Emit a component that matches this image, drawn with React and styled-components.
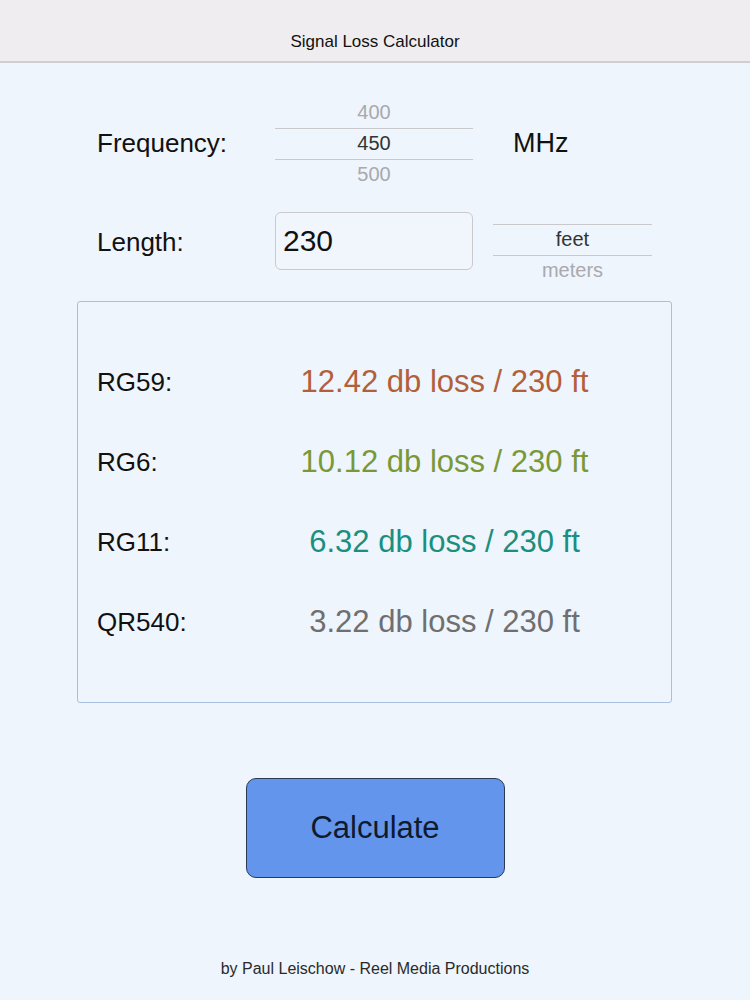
import styled, { createGlobalStyle } from "styled-components";

const GlobalStyle = createGlobalStyle`
  html, body {
    margin: 0;
    padding: 0;
    background: #eef5fc;
    font-family: "Liberation Sans", Arial, sans-serif;
  }
  * { box-sizing: border-box; }
`;

const Page = styled.div`
  width: 750px;
  height: 1000px;
  display: flex;
  flex-direction: column;
  background: #eef5fc;
  color: #111;
`;

const Header = styled.header`
  height: 63px;
  background: #efedf0;
  border-bottom: 2px solid #cfcfd2;
  display: flex;
  align-items: flex-end;
  justify-content: center;
  padding-bottom: 9px;
  font-size: 17px;
  color: #111;
`;

const Form = styled.section`
  margin-top: 34px;
  display: flex;
  flex-direction: column;
  gap: 4px;
  padding-left: 97px;
`;

const Row = styled.div`
  display: flex;
  align-items: center;
  height: 93px;
`;

const Label = styled.div`
  width: 178px;
  font-size: 26px;
  color: #111;
  padding-top: ${(p) => (p.$nudge ? "3px" : "0")};
`;

const Picker = styled.div`
  width: ${(p) => p.$width}px;
  display: flex;
  flex-direction: column;
`;

const PickerItem = styled.div`
  height: ${(p) => (p.$selected ? 32 : 30)}px;
  display: flex;
  align-items: center;
  justify-content: center;
  font-size: 20px;
  color: ${(p) => (p.$selected ? "#333" : "#a9a9ad")};
  border-top: ${(p) => (p.$selected ? "1px solid #c9c9cd" : "none")};
  border-bottom: ${(p) => (p.$selected ? "1px solid #c9c9cd" : "none")};
`;

const Unit = styled.div`
  margin-left: 40px;
  font-size: 27px;
  color: #111;
`;

const Input = styled.input`
  width: 198px;
  height: 58px;
  border: 1px solid #cacace;
  border-radius: 6px;
  background: #f0f6fc;
  padding: 0 7px;
  font-family: inherit;
  font-size: 30px;
  color: #111;
  outline: none;
`;

const UnitPicker = styled(Picker)`
  margin-left: 20px;
  margin-top: -2px;
`;

const Results = styled.div`
  margin: 14px 78px 0 77px;
  height: 402px;
  border: 1px solid #aabee2;
  border-radius: 3px;
  padding: 40px 0 0 0;
  display: flex;
  flex-direction: column;
`;

const ResultRow = styled.div`
  height: 80px;
  display: flex;
  align-items: center;
  padding-left: 19px;
`;

const CableName = styled.div`
  width: 121px;
  font-size: 26px;
  color: #111;
`;

const Loss = styled.div`
  flex: 1;
  text-align: center;
  font-size: 31px;
  color: ${(p) => p.$color};
`;

const Button = styled.button`
  margin: 75px auto 0;
  width: 259px;
  height: 100px;
  background: #6495ed;
  border: 1px solid #2c3a57;
  border-radius: 10px;
  font-family: inherit;
  font-size: 31px;
  color: #0f1a2e;
  cursor: pointer;
`;

const Footer = styled.footer`
  margin-top: 82px;
  text-align: center;
  font-size: 16px;
  color: #2a2a2a;
`;

const cables = [
  { name: "RG59:", loss: "12.42", color: "#b25f3b" },
  { name: "RG6:", loss: "10.12", color: "#7a9838" },
  { name: "RG11:", loss: "6.32", color: "#1a8f7f" },
  { name: "QR540:", loss: "3.22", color: "#6f6f72" },
];

export default function App() {
  return (
    <Page>
      <GlobalStyle />
      <Header>Signal Loss Calculator</Header>
      <Form>
        <Row>
          <Label>Frequency:</Label>
          <Picker $width={198}>
            <PickerItem>400</PickerItem>
            <PickerItem $selected>450</PickerItem>
            <PickerItem>500</PickerItem>
          </Picker>
          <Unit>MHz</Unit>
        </Row>
        <Row>
          <Label $nudge>Length:</Label>
          <Input defaultValue="230" />
          <UnitPicker $width={159}>
            <PickerItem />
            <PickerItem $selected>feet</PickerItem>
            <PickerItem>meters</PickerItem>
          </UnitPicker>
        </Row>
      </Form>
      <Results>
        {cables.map((c) => (
          <ResultRow key={c.name}>
            <CableName>{c.name}</CableName>
            <Loss $color={c.color}>{c.loss} db loss / 230 ft</Loss>
          </ResultRow>
        ))}
      </Results>
      <Button>Calculate</Button>
      <Footer>by Paul Leischow - Reel Media Productions</Footer>
    </Page>
  );
}
